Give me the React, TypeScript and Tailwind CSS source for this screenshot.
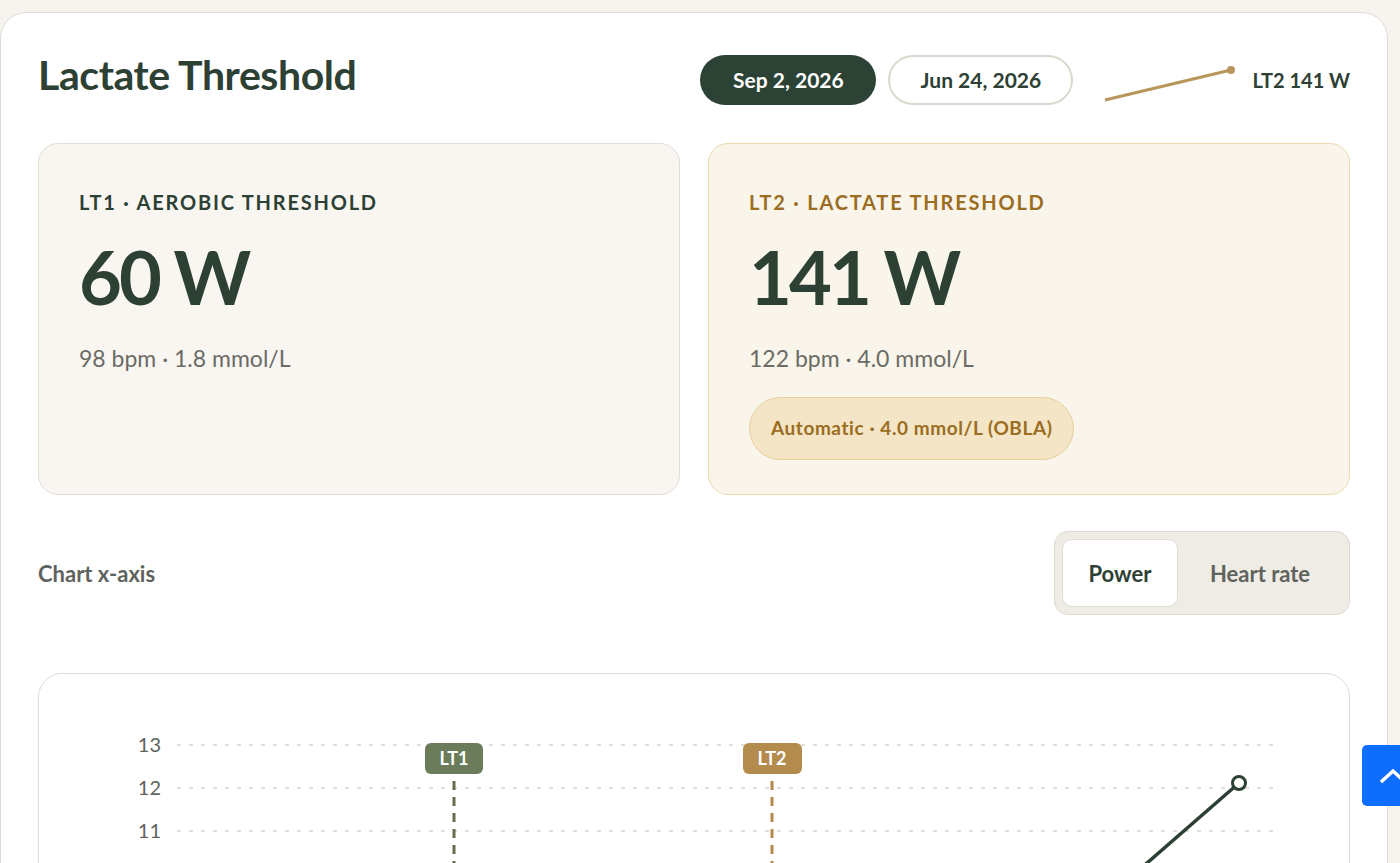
import React, { useState } from "react";

const font = { fontFamily: "Lato, 'Noto Sans', sans-serif" };

const ThresholdCard: React.FC<{
  label: string;
  value: string;
  sub: string;
  tone: "lt1" | "lt2";
  badge?: string;
}> = ({ label, value, sub, tone, badge }) => {
  const isLt2 = tone === "lt2";
  return (
    <div
      className={
        isLt2
          ? "h-[352px] rounded-[20px] border border-[#ecd9b0] bg-[#faf5ea] px-10 pt-[46px]"
          : "h-[352px] rounded-[20px] border border-[#e2ddd4] bg-[#f9f6f1] px-10 pt-[46px]"
      }
    >
      <p
        className={
          isLt2
            ? "text-[20px] font-bold uppercase tracking-[0.09em] leading-6 text-[#9b6d22]"
            : "text-[20px] font-bold uppercase tracking-[0.09em] leading-6 text-[#2d4034]"
        }
      >
        {label}
      </p>
      <p className="mt-[24px] text-[74px] font-bold leading-[78px] tracking-[-0.04em] text-[#2d4034]">
        {value}
      </p>
      <p className="mt-[26px] text-[23px] leading-8 text-[#6b6b66]">{sub}</p>
      {badge && (
        <span className="mt-[23px] inline-flex h-[63px] items-center rounded-full border border-[#e6cf9c] bg-[#f3e5c5] px-[21px] text-[19px] font-bold tracking-[0.03em] text-[#9b6d22]">
          {badge}
        </span>
      )}
    </div>
  );
};

const Chart: React.FC = () => {
  // only the rows that fit above the fold
  const grid = [
    { y: 71, label: "13" },
    { y: 114, label: "12" },
    { y: 157, label: "11" },
  ];
  return (
    <svg width="1310" height="190" className="block">
      {grid.map((g) => (
        <g key={g.label}>
          <line
            x1="138"
            x2="1237"
            y1={g.y}
            y2={g.y}
            stroke="#d6d3cc"
            strokeWidth="1.5"
            strokeDasharray="4 8"
          />
          <text
            x="122"
            y={g.y + 7}
            textAnchor="end"
            fontSize="20"
            fill="#5f635e"
            style={font}
          >
            {g.label}
          </text>
        </g>
      ))}
      <line x1="415" x2="415" y1="107" y2="190" stroke="#6b6b4a" strokeWidth="3" strokeDasharray="9 7" />
      <rect x="386" y="69" width="58" height="31" rx="6" fill="#6b7c5a" />
      <text x="415" y="91" textAnchor="middle" fontSize="18" fontWeight="700" fill="#fff" style={font}>
        LT1
      </text>
      <line x1="733" x2="733" y1="107" y2="190" stroke="#b38b4d" strokeWidth="3" strokeDasharray="9 7" />
      <rect x="704" y="69" width="59" height="31" rx="6" fill="#b38b4d" />
      <text x="733" y="91" textAnchor="middle" fontSize="18" fontWeight="700" fill="#fff" style={font}>
        LT2
      </text>
      <line x1="1200" y1="109" x2="1100" y2="196" stroke="#2d4034" strokeWidth="3.5" />
      <circle cx="1200" cy="109" r="6.5" fill="#fff" stroke="#2d4034" strokeWidth="3" />
    </svg>
  );
};

export default function App() {
  const [date, setDate] = useState("sep");
  const [axis, setAxis] = useState("power");

  return (
    <div className="h-[863px] w-[1400px] overflow-hidden bg-[#f7f4ef]" style={font}>
      <div className="relative pt-3">
        <div className="w-[1388px] rounded-[26px] border border-[#e0dcd3] bg-white px-[37px] pt-[38px] pb-10">
          <div className="flex items-start justify-between">
            <h1 className="mt-[1px] text-[41px] font-bold leading-[46px] tracking-[-0.01em] text-[#2d4034]">
              Lactate Threshold
            </h1>
            <div className="mt-[4px] flex items-center">
              <button
                onClick={() => setDate("sep")}
                className={
                  date === "sep"
                    ? "h-[50px] w-[176px] rounded-full bg-[#2c4234] text-[21px] font-bold text-white"
                    : "h-[50px] w-[176px] rounded-full border border-[#dcd8ce] bg-white text-[21px] font-bold text-[#2d4034]"
                }
              >
                Sep 2, 2026
              </button>
              <button
                onClick={() => setDate("jun")}
                className={
                  date === "jun"
                    ? "ml-[12px] h-[50px] w-[185px] rounded-full bg-[#2c4234] text-[21px] font-bold text-white"
                    : "ml-[12px] h-[50px] w-[185px] rounded-full border-2 border-[#dcd8ce] bg-white text-[21px] font-bold text-[#2d4034]"
                }
              >
                Jun 24, 2026
              </button>
              <svg width="136" height="40" className="ml-[30px] mt-[6px]">
                <line x1="2" y1="37" x2="128" y2="7" stroke="#b8955a" strokeWidth="3" />
                <circle cx="128" cy="7" r="4" fill="#b8955a" />
              </svg>
              <span className="ml-[13px] text-[20px] font-bold text-[#2d4034]">LT2 141 W</span>
            </div>
          </div>

          <div className="mt-[38px] grid grid-cols-2 gap-[28px]">
            <ThresholdCard
              tone="lt1"
              label="LT1 · Aerobic threshold"
              value="60 W"
              sub="98 bpm · 1.8 mmol/L"
            />
            <ThresholdCard
              tone="lt2"
              label="LT2 · Lactate threshold"
              value="141 W"
              sub="122 bpm · 4.0 mmol/L"
              badge="Automatic · 4.0 mmol/L (OBLA)"
            />
          </div>

          <div className="mt-[36px] flex items-center justify-between">
            <span className="text-[22px] font-bold text-[#5f635e]">Chart x-axis</span>
            <div className="flex h-[84px] items-center rounded-[14px] border border-[#dcd8ce] bg-[#efece6] p-[7px]">
              <button
                onClick={() => setAxis("power")}
                className={
                  axis === "power"
                    ? "h-[68px] w-[116px] rounded-[10px] border border-[#e2ded6] bg-white text-[22px] font-bold text-[#2d4034]"
                    : "h-[68px] w-[116px] rounded-[10px] text-[22px] font-bold text-[#5f635e]"
                }
              >
                Power
              </button>
              <button
                onClick={() => setAxis("hr")}
                className={
                  axis === "hr"
                    ? "h-[68px] w-[164px] rounded-[10px] bg-white text-[22px] font-bold text-[#2d4034]"
                    : "h-[68px] w-[164px] rounded-[10px] text-[22px] font-bold text-[#5f635e]"
                }
              >
                Heart rate
              </button>
            </div>
          </div>

          <div className="mt-[58px] h-[420px] overflow-hidden rounded-[24px] border border-[#e0dcd3] bg-white">
            <Chart />
          </div>
        </div>

        <button className="absolute left-[1362px] top-[745px] flex h-[61px] w-[60px] items-center rounded-[5px] bg-[#0d6efd] pl-[16px]">
          <svg width="30" height="20" viewBox="0 0 30 20">
            <polyline points="3,16 15,5 27,16" fill="none" stroke="#fff" strokeWidth="3.5" />
          </svg>
        </button>
      </div>
    </div>
  );
}
